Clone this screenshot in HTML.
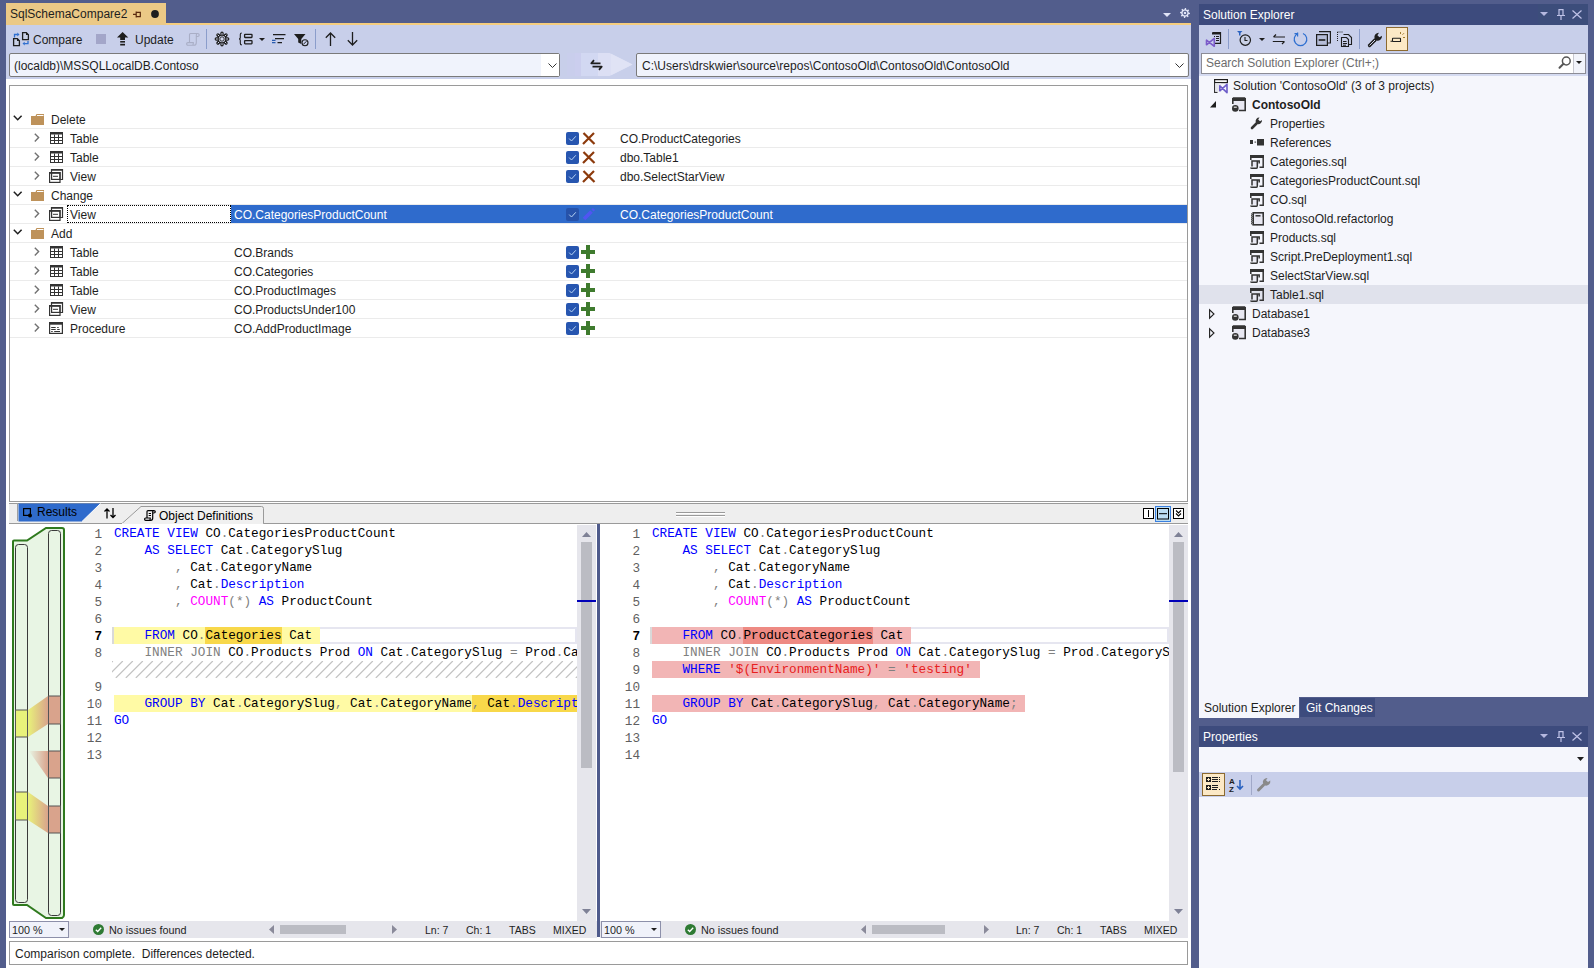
<!DOCTYPE html>
<html><head><meta charset="utf-8">
<style>
*{box-sizing:border-box}
html,body{margin:0;padding:0}
body{width:1594px;height:968px;overflow:hidden;position:relative;background:#525D8C;font-family:"Liberation Sans",sans-serif;font-size:12px;color:#1E1E1E}
.a{position:absolute}
.t{position:absolute;white-space:pre;line-height:14px}
svg{position:absolute;overflow:visible}
.m{position:absolute;white-space:pre;font-family:"Liberation Mono",monospace;font-size:12.7px;line-height:17px;color:#000}
.k{color:#0000FF}.g{color:#808080}.p{color:#FF00FF}.r{color:#E82020}
</style></head><body>

<div class="a" style="left:6px;top:3px;width:160px;height:22px;background:#EBC986;"></div>
<div class="t" style="left:10px;top:7px;">SqlSchemaCompare2</div>
<div class="a" style="left:166px;top:23px;width:1025px;height:2px;background:#F5CD7E;"></div>
<div class="a" style="left:6px;top:25px;width:1185px;height:54px;background:#C8CFEA;"></div>
<div class="a" style="left:6px;top:79px;width:1185px;height:889px;background:#FFFFFF;"></div>
<div class="a" style="left:9px;top:53px;width:551px;height:24px;background:#F0F3FC;border:1px solid #7A7A7A;border-radius:2px"></div>
<div class="t" style="left:14px;top:59px;">(localdb)\MSSQLLocalDB.Contoso</div>
<div class="a" style="left:636px;top:53px;width:553px;height:24px;background:#F0F3FC;border:1px solid #7A7A7A;border-radius:2px"></div>
<div class="t" style="left:642px;top:59px;">C:\Users\drskwier\source\repos\ContosoOld\ContosoOld\ContosoOld</div>
<div class="a" style="left:9px;top:85px;width:1179px;height:417px;background:#FFFFFF;border:1px solid #9A9A9A"></div>
<div class="a" style="left:10px;top:128px;width:1177px;height:1px;background:#EBEBEB;"></div>
<svg style="left:13px;top:115px" width="10" height="6" viewBox="0 0 10 6"><path d="M0.8 0.8L4.7 4.7L8.6 0.8" fill="none" stroke="#1E1E1E" stroke-width="1.5"/></svg>
<svg style="left:31px;top:114px" width="13" height="11" viewBox="0 0 13 11"><path d="M0 2H4.5L5.5 0H13V11H0Z" fill="#BE925A"/><rect x="6" y="1" width="6.5" height="1" fill="#fff"/></svg>
<div class="t" style="left:51px;top:113px;">Delete</div>
<div class="a" style="left:10px;top:147px;width:1177px;height:1px;background:#EBEBEB;"></div>
<svg style="left:34px;top:133px" width="6" height="10" viewBox="0 0 6 10"><path d="M0.8 0.8L4.6 4.6L0.8 8.4" fill="none" stroke="#717171" stroke-width="1.4"/></svg>
<svg style="left:50px;top:132px" width="13" height="12" viewBox="0 0 13 12"><rect x="0.5" y="0.5" width="12" height="11" fill="#fff" stroke="#333" stroke-width="1"/><rect x="0" y="0" width="13" height="2.5" fill="#333"/><path d="M4.5 2.5V12M8.5 2.5V12M0 5.5H13M0 8.5H13" stroke="#333" stroke-width="1"/></svg>
<div class="t" style="left:70px;top:132px;">Table</div>
<svg style="left:566px;top:132px" width="13" height="13" viewBox="0 0 13 13"><rect x="0" y="0" width="13" height="13" rx="2" fill="#2756B0"/><path d="M3.2 6.6L5.5 9L9.8 4.3" fill="none" stroke="#B8D4F4" stroke-width="1"/></svg>
<svg style="left:582px;top:132px" width="14" height="13" viewBox="0 0 14 13"><path d="M1.5 1L12.5 12M12 1L1 12" stroke="#8C3A0C" stroke-width="2.2"/></svg>
<div class="t" style="left:620px;top:132px;">CO.ProductCategories</div>
<div class="a" style="left:10px;top:166px;width:1177px;height:1px;background:#EBEBEB;"></div>
<svg style="left:34px;top:152px" width="6" height="10" viewBox="0 0 6 10"><path d="M0.8 0.8L4.6 4.6L0.8 8.4" fill="none" stroke="#717171" stroke-width="1.4"/></svg>
<svg style="left:50px;top:151px" width="13" height="12" viewBox="0 0 13 12"><rect x="0.5" y="0.5" width="12" height="11" fill="#fff" stroke="#333" stroke-width="1"/><rect x="0" y="0" width="13" height="2.5" fill="#333"/><path d="M4.5 2.5V12M8.5 2.5V12M0 5.5H13M0 8.5H13" stroke="#333" stroke-width="1"/></svg>
<div class="t" style="left:70px;top:151px;">Table</div>
<svg style="left:566px;top:151px" width="13" height="13" viewBox="0 0 13 13"><rect x="0" y="0" width="13" height="13" rx="2" fill="#2756B0"/><path d="M3.2 6.6L5.5 9L9.8 4.3" fill="none" stroke="#B8D4F4" stroke-width="1"/></svg>
<svg style="left:582px;top:151px" width="14" height="13" viewBox="0 0 14 13"><path d="M1.5 1L12.5 12M12 1L1 12" stroke="#8C3A0C" stroke-width="2.2"/></svg>
<div class="t" style="left:620px;top:151px;">dbo.Table1</div>
<div class="a" style="left:10px;top:185px;width:1177px;height:1px;background:#EBEBEB;"></div>
<svg style="left:34px;top:171px" width="6" height="10" viewBox="0 0 6 10"><path d="M0.8 0.8L4.6 4.6L0.8 8.4" fill="none" stroke="#717171" stroke-width="1.4"/></svg>
<svg style="left:49px;top:169px" width="14" height="14" viewBox="0 0 14 14"><path d="M2.5 3.5V0.5H13.5V10.5H11" fill="none" stroke="#333" stroke-width="1.2"/><rect x="2.6" y="3.6" width="8.4" height="6.8" fill="none" stroke="#333" stroke-width="1.2"/><rect x="0.6" y="3.6" width="10.4" height="9.8" fill="none" stroke="#333" stroke-width="1.2"/><path d="M2 1H13.5M0.5 4H11" stroke="#333" stroke-width="1.5"/><path d="M4 7.3H9" stroke="#333" stroke-width="1"/></svg>
<div class="t" style="left:70px;top:170px;">View</div>
<svg style="left:566px;top:170px" width="13" height="13" viewBox="0 0 13 13"><rect x="0" y="0" width="13" height="13" rx="2" fill="#2756B0"/><path d="M3.2 6.6L5.5 9L9.8 4.3" fill="none" stroke="#B8D4F4" stroke-width="1"/></svg>
<svg style="left:582px;top:170px" width="14" height="13" viewBox="0 0 14 13"><path d="M1.5 1L12.5 12M12 1L1 12" stroke="#8C3A0C" stroke-width="2.2"/></svg>
<div class="t" style="left:620px;top:170px;">dbo.SelectStarView</div>
<div class="a" style="left:10px;top:204px;width:1177px;height:1px;background:#EBEBEB;"></div>
<svg style="left:13px;top:191px" width="10" height="6" viewBox="0 0 10 6"><path d="M0.8 0.8L4.7 4.7L8.6 0.8" fill="none" stroke="#1E1E1E" stroke-width="1.5"/></svg>
<svg style="left:31px;top:190px" width="13" height="11" viewBox="0 0 13 11"><path d="M0 2H4.5L5.5 0H13V11H0Z" fill="#BE925A"/><rect x="6" y="1" width="6.5" height="1" fill="#fff"/></svg>
<div class="t" style="left:51px;top:189px;">Change</div>
<div class="a" style="left:10px;top:223px;width:1177px;height:1px;background:#EBEBEB;"></div>
<div class="a" style="left:231px;top:200px;width:956px;height:19px;background:#2F6BCC;top:205px;height:18px"></div>
<div class="a" style="left:67px;top:205px;width:164px;height:18px;background:#FFFFFF;border:1px dotted #000"></div>
<svg style="left:34px;top:209px" width="6" height="10" viewBox="0 0 6 10"><path d="M0.8 0.8L4.6 4.6L0.8 8.4" fill="none" stroke="#717171" stroke-width="1.4"/></svg>
<svg style="left:49px;top:207px" width="14" height="14" viewBox="0 0 14 14"><path d="M2.5 3.5V0.5H13.5V10.5H11" fill="none" stroke="#333" stroke-width="1.2"/><rect x="2.6" y="3.6" width="8.4" height="6.8" fill="none" stroke="#333" stroke-width="1.2"/><rect x="0.6" y="3.6" width="10.4" height="9.8" fill="none" stroke="#333" stroke-width="1.2"/><path d="M2 1H13.5M0.5 4H11" stroke="#333" stroke-width="1.5"/><path d="M4 7.3H9" stroke="#333" stroke-width="1"/></svg>
<div class="t" style="left:70px;top:208px;">View</div>
<div class="t" style="left:234px;top:208px;color:#FFFFFF;">CO.CategoriesProductCount</div>
<svg style="left:566px;top:208px" width="13" height="13" viewBox="0 0 13 13"><rect x="0" y="0" width="13" height="13" rx="2" fill="#2652AA"/><path d="M3.2 6.6L5.5 9L9.8 4.3" fill="none" stroke="#B8D4F4" stroke-width="1"/></svg>
<svg style="left:582px;top:208px" width="14" height="13" viewBox="0 0 14 13"><path d="M2 11L9.5 3.5" stroke="#5055F2" stroke-width="3.8"/><path d="M10.5 2.5L12 1" stroke="#5055F2" stroke-width="3"/></svg>
<div class="t" style="left:620px;top:208px;color:#FFFFFF;">CO.CategoriesProductCount</div>
<div class="a" style="left:10px;top:242px;width:1177px;height:1px;background:#EBEBEB;"></div>
<svg style="left:13px;top:229px" width="10" height="6" viewBox="0 0 10 6"><path d="M0.8 0.8L4.7 4.7L8.6 0.8" fill="none" stroke="#1E1E1E" stroke-width="1.5"/></svg>
<svg style="left:31px;top:228px" width="13" height="11" viewBox="0 0 13 11"><path d="M0 2H4.5L5.5 0H13V11H0Z" fill="#BE925A"/><rect x="6" y="1" width="6.5" height="1" fill="#fff"/></svg>
<div class="t" style="left:51px;top:227px;">Add</div>
<div class="a" style="left:10px;top:261px;width:1177px;height:1px;background:#EBEBEB;"></div>
<svg style="left:34px;top:247px" width="6" height="10" viewBox="0 0 6 10"><path d="M0.8 0.8L4.6 4.6L0.8 8.4" fill="none" stroke="#717171" stroke-width="1.4"/></svg>
<svg style="left:50px;top:246px" width="13" height="12" viewBox="0 0 13 12"><rect x="0.5" y="0.5" width="12" height="11" fill="#fff" stroke="#333" stroke-width="1"/><rect x="0" y="0" width="13" height="2.5" fill="#333"/><path d="M4.5 2.5V12M8.5 2.5V12M0 5.5H13M0 8.5H13" stroke="#333" stroke-width="1"/></svg>
<div class="t" style="left:70px;top:246px;">Table</div>
<div class="t" style="left:234px;top:246px;">CO.Brands</div>
<svg style="left:566px;top:246px" width="13" height="13" viewBox="0 0 13 13"><rect x="0" y="0" width="13" height="13" rx="2" fill="#2756B0"/><path d="M3.2 6.6L5.5 9L9.8 4.3" fill="none" stroke="#B8D4F4" stroke-width="1"/></svg>
<svg style="left:581px;top:245px" width="14" height="14" viewBox="0 0 14 14"><path d="M5 0H9V5H14V9H9V14H5V9H0V5H5Z" fill="#3F7B2E"/></svg>
<div class="a" style="left:10px;top:280px;width:1177px;height:1px;background:#EBEBEB;"></div>
<svg style="left:34px;top:266px" width="6" height="10" viewBox="0 0 6 10"><path d="M0.8 0.8L4.6 4.6L0.8 8.4" fill="none" stroke="#717171" stroke-width="1.4"/></svg>
<svg style="left:50px;top:265px" width="13" height="12" viewBox="0 0 13 12"><rect x="0.5" y="0.5" width="12" height="11" fill="#fff" stroke="#333" stroke-width="1"/><rect x="0" y="0" width="13" height="2.5" fill="#333"/><path d="M4.5 2.5V12M8.5 2.5V12M0 5.5H13M0 8.5H13" stroke="#333" stroke-width="1"/></svg>
<div class="t" style="left:70px;top:265px;">Table</div>
<div class="t" style="left:234px;top:265px;">CO.Categories</div>
<svg style="left:566px;top:265px" width="13" height="13" viewBox="0 0 13 13"><rect x="0" y="0" width="13" height="13" rx="2" fill="#2756B0"/><path d="M3.2 6.6L5.5 9L9.8 4.3" fill="none" stroke="#B8D4F4" stroke-width="1"/></svg>
<svg style="left:581px;top:264px" width="14" height="14" viewBox="0 0 14 14"><path d="M5 0H9V5H14V9H9V14H5V9H0V5H5Z" fill="#3F7B2E"/></svg>
<div class="a" style="left:10px;top:299px;width:1177px;height:1px;background:#EBEBEB;"></div>
<svg style="left:34px;top:285px" width="6" height="10" viewBox="0 0 6 10"><path d="M0.8 0.8L4.6 4.6L0.8 8.4" fill="none" stroke="#717171" stroke-width="1.4"/></svg>
<svg style="left:50px;top:284px" width="13" height="12" viewBox="0 0 13 12"><rect x="0.5" y="0.5" width="12" height="11" fill="#fff" stroke="#333" stroke-width="1"/><rect x="0" y="0" width="13" height="2.5" fill="#333"/><path d="M4.5 2.5V12M8.5 2.5V12M0 5.5H13M0 8.5H13" stroke="#333" stroke-width="1"/></svg>
<div class="t" style="left:70px;top:284px;">Table</div>
<div class="t" style="left:234px;top:284px;">CO.ProductImages</div>
<svg style="left:566px;top:284px" width="13" height="13" viewBox="0 0 13 13"><rect x="0" y="0" width="13" height="13" rx="2" fill="#2756B0"/><path d="M3.2 6.6L5.5 9L9.8 4.3" fill="none" stroke="#B8D4F4" stroke-width="1"/></svg>
<svg style="left:581px;top:283px" width="14" height="14" viewBox="0 0 14 14"><path d="M5 0H9V5H14V9H9V14H5V9H0V5H5Z" fill="#3F7B2E"/></svg>
<div class="a" style="left:10px;top:318px;width:1177px;height:1px;background:#EBEBEB;"></div>
<svg style="left:34px;top:304px" width="6" height="10" viewBox="0 0 6 10"><path d="M0.8 0.8L4.6 4.6L0.8 8.4" fill="none" stroke="#717171" stroke-width="1.4"/></svg>
<svg style="left:49px;top:302px" width="14" height="14" viewBox="0 0 14 14"><path d="M2.5 3.5V0.5H13.5V10.5H11" fill="none" stroke="#333" stroke-width="1.2"/><rect x="2.6" y="3.6" width="8.4" height="6.8" fill="none" stroke="#333" stroke-width="1.2"/><rect x="0.6" y="3.6" width="10.4" height="9.8" fill="none" stroke="#333" stroke-width="1.2"/><path d="M2 1H13.5M0.5 4H11" stroke="#333" stroke-width="1.5"/><path d="M4 7.3H9" stroke="#333" stroke-width="1"/></svg>
<div class="t" style="left:70px;top:303px;">View</div>
<div class="t" style="left:234px;top:303px;">CO.ProductsUnder100</div>
<svg style="left:566px;top:303px" width="13" height="13" viewBox="0 0 13 13"><rect x="0" y="0" width="13" height="13" rx="2" fill="#2756B0"/><path d="M3.2 6.6L5.5 9L9.8 4.3" fill="none" stroke="#B8D4F4" stroke-width="1"/></svg>
<svg style="left:581px;top:302px" width="14" height="14" viewBox="0 0 14 14"><path d="M5 0H9V5H14V9H9V14H5V9H0V5H5Z" fill="#3F7B2E"/></svg>
<div class="a" style="left:10px;top:337px;width:1177px;height:1px;background:#EBEBEB;"></div>
<svg style="left:34px;top:323px" width="6" height="10" viewBox="0 0 6 10"><path d="M0.8 0.8L4.6 4.6L0.8 8.4" fill="none" stroke="#717171" stroke-width="1.4"/></svg>
<svg style="left:49px;top:322px" width="14" height="12" viewBox="0 0 14 12"><rect x="0.6" y="0.6" width="12.8" height="10.8" fill="#fff" stroke="#333" stroke-width="1.2"/><rect x="0" y="0" width="14" height="2.7" fill="#333"/><path d="M2.2 5.5H6.7M8.2 5.5H9.7M2.2 7.5H6.7M8.2 7.5H10.7M2.2 9.5H3.7M5.2 9.5H11" stroke="#333" stroke-width="1"/></svg>
<div class="t" style="left:70px;top:322px;">Procedure</div>
<div class="t" style="left:234px;top:322px;">CO.AddProductImage</div>
<svg style="left:566px;top:322px" width="13" height="13" viewBox="0 0 13 13"><rect x="0" y="0" width="13" height="13" rx="2" fill="#2756B0"/><path d="M3.2 6.6L5.5 9L9.8 4.3" fill="none" stroke="#B8D4F4" stroke-width="1"/></svg>
<svg style="left:581px;top:321px" width="14" height="14" viewBox="0 0 14 14"><path d="M5 0H9V5H14V9H9V14H5V9H0V5H5Z" fill="#3F7B2E"/></svg>
<svg style="left:12px;top:32px" width="18" height="15" viewBox="0 0 18 15"><path d="M1.6 6.6H5.3L7.4 8.7V13.6H1.6Z" fill="#C9D0E6" stroke="#1E1E1E" stroke-width="1.3"/><path d="M5 6.2L7.8 9H5Z" fill="#1E1E1E"/>
<path d="M10.6 0.6H14.3L16.4 2.7V7.6H10.6Z" fill="#C9D0E6" stroke="#1E1E1E" stroke-width="1.3"/><path d="M14 0.2L16.8 3H14Z" fill="#1E1E1E"/>
<path d="M2.5 5.5V2.5H5.8" fill="none" stroke="#2F6FCF" stroke-width="1.3"/><path d="M5.3 0.6L7.5 2.5L5.3 4.4Z" fill="#2F6FCF"/>
<path d="M16 9V11.6H12.2" fill="none" stroke="#2F6FCF" stroke-width="1.3"/><path d="M12.7 9.7L10.5 11.6L12.7 13.5Z" fill="#2F6FCF"/></svg>
<div class="t" style="left:33px;top:33px;">Compare</div>
<div class="a" style="left:96px;top:34px;width:10px;height:10px;background:#A3A6C9;"></div>
<svg style="left:117px;top:32px" width="12" height="14" viewBox="0 0 12 14"><path d="M5.6 0L11.3 5.5H8V8H3.2V5.5H0Z" fill="#1E1E1E"/><rect x="3.2" y="9" width="4.8" height="1.6" fill="#1E1E1E"/><rect x="3.2" y="11.8" width="4.8" height="1.7" fill="#1E1E1E"/></svg>
<div class="t" style="left:135px;top:33px;">Update</div>
<svg style="left:186px;top:33px" width="14" height="13" viewBox="0 0 14 13"><path d="M3.5 10V1.5Q3.5 0.5 4.5 0.5H11.5Q13.2 0.5 13.2 2Q13.2 3.5 11.5 3.5H10.5M11.5 0.5Q10.3 0.5 10.3 2V9.5Q10.3 12.3 8 12.3H2Q0.6 12.3 0.6 10.8Q0.6 9.6 2 9.6H7.3V10.8Q7.3 12.3 6 12.3" fill="none" stroke="#A9AEC6" stroke-width="1.1"/></svg>
<div class="a" style="left:206px;top:29px;width:1px;height:20px;background:#8B9DCB;"></div>
<svg style="left:215px;top:32px" width="14" height="14" viewBox="0 0 14 14"><path d="M11.60 7.00L12.70 7.00M10.25 10.25L11.03 11.03M7.00 11.60L7.00 12.70M3.75 10.25L2.97 11.03M2.40 7.00L1.30 7.00M3.75 3.75L2.97 2.97M7.00 2.40L7.00 1.30M10.25 3.75L11.03 2.97" stroke="#1E1E1E" stroke-width="3.4" stroke-linecap="round"/><circle cx="7" cy="7" r="4.3" fill="#1E1E1E"/><path d="M11.60 7.00L12.70 7.00M10.25 10.25L11.03 11.03M7.00 11.60L7.00 12.70M3.75 10.25L2.97 11.03M2.40 7.00L1.30 7.00M3.75 3.75L2.97 2.97M7.00 2.40L7.00 1.30M10.25 3.75L11.03 2.97" stroke="#D5DAF0" stroke-width="1" stroke-linecap="round"/><circle cx="7" cy="7" r="3.2" fill="#D5DAF0"/><circle cx="7" cy="7" r="2.2" fill="none" stroke="#1E1E1E" stroke-width="0.9"/></svg>
<svg style="left:238px;top:32px" width="15" height="14" viewBox="0 0 15 14"><path d="M3.8 1Q2.3 1 2.3 2.6V5.4Q2.3 6.9 1 6.9Q2.3 6.9 2.3 8.4V11.2Q2.3 12.9 3.8 12.9" fill="none" stroke="#1E1E1E" stroke-width="1.1"/><rect x="6.6" y="2.3" width="7.4" height="3.2" rx="0.5" fill="none" stroke="#1E1E1E" stroke-width="1.3"/><rect x="6.6" y="8.6" width="7.4" height="3.2" rx="0.5" fill="none" stroke="#1E1E1E" stroke-width="1.3"/></svg>
<svg style="left:259px;top:38px" width="6" height="3" viewBox="0 0 6 3"><path d="M0 0H6L3 3Z" fill="#1E1E1E"/></svg>
<svg style="left:271px;top:34px" width="15" height="10" viewBox="0 0 15 10"><path d="M2 0.6H14.5M4 4.6H13M6.5 8.6H11" stroke="#1E1E1E" stroke-width="1.2"/><path d="M1 6.3H4.5M1 8.6H4.5" stroke="#2A5DB0" stroke-width="1.2"/></svg>
<svg style="left:294px;top:34px" width="15" height="12" viewBox="0 0 15 12"><path d="M0 0H11.5L7.3 5V10L4.2 8.5V5Z" fill="#1E1E1E"/><circle cx="11" cy="8.7" r="3" fill="#CAD1EB" stroke="#1E1E1E" stroke-width="1.1"/><path d="M9.5 10.2L12.5 7.2" stroke="#1E1E1E" stroke-width="1"/></svg>
<div class="a" style="left:315px;top:29px;width:1px;height:20px;background:#8B9DCB;"></div>
<svg style="left:325px;top:32px" width="11" height="14" viewBox="0 0 11 14"><path d="M5.5 1V14M0.8 5.7L5.5 1L10.2 5.7" fill="none" stroke="#1E1E1E" stroke-width="1.3"/></svg>
<svg style="left:347px;top:32px" width="11" height="14" viewBox="0 0 11 14"><path d="M5.5 0V13M0.8 8.3L5.5 13L10.2 8.3" fill="none" stroke="#1E1E1E" stroke-width="1.3"/></svg>
<svg style="left:133px;top:11px" width="8" height="7" viewBox="0 0 8 7"><path d="M0 3.4H3M3.2 0.5V6.5M3.2 1.3H7.3V5.6H3.2" fill="none" stroke="#5A2A0E" stroke-width="1.2"/></svg>
<svg style="left:151px;top:10px" width="8" height="8" viewBox="0 0 8 8"><circle cx="4" cy="4" r="3.9" fill="#1E1E1E"/></svg>
<svg style="left:1163px;top:13px" width="8" height="4" viewBox="0 0 8 4"><path d="M0 0H8L4 4Z" fill="#E0E4F7"/></svg>
<svg style="left:1180px;top:8px" width="10" height="10" viewBox="0 0 10 10"><path d="M5.00 0.00 L5.98 0.10 L6.38 1.67 L7.00 2.01 L8.54 1.46 L9.16 2.22 L8.33 3.62 L8.53 4.30 L10.00 5.00 L9.90 5.98 L8.33 6.38 L7.99 7.00 L8.54 8.54 L7.78 9.16 L6.38 8.33 L5.70 8.53 L5.00 10.00 L4.02 9.90 L3.62 8.33 L3.00 7.99 L1.46 8.54 L0.84 7.78 L1.67 6.38 L1.47 5.70 L0.00 5.00 L0.10 4.02 L1.67 3.62 L2.01 3.00 L1.46 1.46 L2.22 0.84 L3.62 1.67 L4.30 1.47Z" fill="#E0E4F7"/><circle cx="5" cy="5" r="1.9" fill="none" stroke="#3D4B7D" stroke-width="1"/></svg>
<div class="a" style="left:541px;top:54px;width:18px;height:22px;background:#FFFFFF;"></div>
<svg style="left:548px;top:63px" width="9" height="5" viewBox="0 0 9 5"><path d="M0.5 0.5L4.5 4.5L8.5 0.5" fill="none" stroke="#333" stroke-width="1"/></svg>
<div class="a" style="left:1170px;top:54px;width:17px;height:22px;background:#FFFFFF;"></div>
<svg style="left:1175px;top:63px" width="9" height="5" viewBox="0 0 9 5"><path d="M0.5 0.5L4.5 4.5L8.5 0.5" fill="none" stroke="#333" stroke-width="1"/></svg>
<svg style="left:567px;top:53px" width="66" height="23" viewBox="0 0 66 23"><rect x="0" y="0" width="8" height="23" fill="#C9CEEC"/><rect x="8" y="0" width="6" height="23" fill="#CBCEEE"/>
<rect x="14" y="0" width="17" height="23" fill="#D2D8F2"/>
<path d="M31 0H42.5L65.5 11.5L42.5 23H31Z" fill="#DCDFF4"/><path d="M44 0.7L65.5 11.5L44 22.3Z" fill="#E0E3F5"/></svg>
<svg style="left:590px;top:59px" width="13" height="12" viewBox="0 0 13 12"><path d="M10.5 4.3H1.3L4 1.2" fill="none" stroke="#1E1E1E" stroke-width="1.8" stroke-linejoin="round"/><path d="M2.5 7.7H11.7L9 10.8" fill="none" stroke="#1E1E1E" stroke-width="1.8" stroke-linejoin="round"/></svg>
<div class="a" style="left:9px;top:502px;width:1179px;height:22px;background:#EEEEEE;"></div>
<div class="a" style="left:9px;top:502px;width:1179px;height:1px;background:#FFFFFF;"></div>
<div class="a" style="left:9px;top:503px;width:1179px;height:1px;background:#9A9A9A;"></div>
<div class="a" style="left:9px;top:523px;width:1179px;height:1px;background:#9A9A9A;"></div>
<svg style="left:9px;top:503px" width="255" height="21" viewBox="0 0 255 21"><path d="M8.5 0V18" stroke="#A0A0A0" stroke-width="1"/>
<path d="M9.5 0.5H91.5L73 18.5H9.5Z" fill="#2F6BCC"/>
<path d="M91.5 0.5L73 18.5" stroke="#FFFFFF" stroke-width="1"/>
<path d="M113 20.5L132 3.5H252.5Q254.5 3.5 254.5 5.5V20.5" fill="#F0F0F0" stroke="#9A9A9A" stroke-width="1"/>
<rect x="113" y="20" width="141" height="1" fill="#F0F0F0"/></svg>
<svg style="left:23px;top:508px" width="9" height="10" viewBox="0 0 9 10"><rect x="0.6" y="0.6" width="6.8" height="6.8" fill="none" stroke="#000" stroke-width="1.2"/><circle cx="7" cy="7.5" r="2" fill="#000"/></svg>
<div class="t" style="left:37px;top:505px;color:#000000;">Results</div>
<svg style="left:104px;top:508px" width="12" height="11" viewBox="0 0 12 11"><path d="M3 10.5V1M0.5 3.5L3 1L5.5 3.5M9 0V9.5M6.5 7L9 9.5L11.5 7" fill="none" stroke="#000" stroke-width="1.3"/></svg>
<svg style="left:144px;top:510px" width="12" height="11" viewBox="0 0 12 11"><path d="M3 8.5V1.5Q3 0.6 4 0.6H9.8Q11.3 0.6 11.3 1.8Q11.3 3 9.8 3H9M9.8 0.6Q8.7 0.6 8.7 1.8V8Q8.7 10.3 6.8 10.3H1.7Q0.6 10.3 0.6 9.1Q0.6 8 1.7 8H6.2V9.1Q6.2 10.3 5.1 10.3M4.7 3.5H7M4.7 5.5H7" fill="none" stroke="#000" stroke-width="1.2"/></svg>
<div class="t" style="left:159px;top:509px;color:#000000;">Object Definitions</div>
<svg style="left:1143px;top:508px" width="42" height="13" viewBox="0 0 42 13"><rect x="0.5" y="0.5" width="10" height="10" fill="#fff" stroke="#000"/><path d="M5.5 2V9" stroke="#000"/>
<rect x="12.5" y="-1.5" width="15" height="15" fill="#BCDDF2" stroke="#3A80E0"/><rect x="14.5" y="0.5" width="11" height="10.5" fill="#BCDDF2" stroke="#000"/><path d="M16 5.7H24" stroke="#000"/>
<rect x="30.5" y="0.5" width="10" height="10" fill="#fff" stroke="#000"/><path d="M33 2.5L35.5 5L38 2.5M33 5.5L35.5 8L38 5.5" fill="none" stroke="#000" stroke-width="1.1"/></svg>
<div class="a" style="left:676px;top:512px;width:49px;height:1px;background:#9A9A9A;"></div>
<div class="a" style="left:676px;top:515px;width:49px;height:1px;background:#9A9A9A;"></div>
<div class="a" style="left:676px;top:513px;width:49px;height:1px;background:#FFFFFF;"></div>
<div class="a" style="left:676px;top:516px;width:49px;height:1px;background:#FFFFFF;"></div>
<div class="a" style="left:112px;top:627px;width:465px;height:17px;background:transparent;border:2px solid #E6E6F0;border-left:none"></div>
<div class="a" style="left:112px;top:627px;width:2px;height:17px;background:#D9D9D9;"></div>
<div class="a" style="left:114px;top:627px;width:205.74px;height:17px;background:#FFFAA5;"></div>
<div class="a" style="left:114px;top:695px;width:463px;height:17px;background:#FFFAA5;"></div>
<div class="a" style="left:205.44px;top:627px;width:76.2px;height:17px;background:#F8D84A;"></div>
<div class="a" style="left:472.14px;top:695px;width:104.86px;height:17px;background:#F8D84A;"></div>
<div class="m" style="left:62px;top:526px;width:40px;text-align:right;color:#5F5F5F;">1</div>
<div class="m" style="left:114px;top:525px;width:463px;overflow:hidden"><span class="k">CREATE</span> <span class="k">VIEW</span> CO<span class="g">.</span>CategoriesProductCount</div>
<div class="m" style="left:62px;top:543px;width:40px;text-align:right;color:#5F5F5F;">2</div>
<div class="m" style="left:114px;top:542px;width:463px;overflow:hidden">    <span class="k">AS</span> <span class="k">SELECT</span> Cat<span class="g">.</span>CategorySlug</div>
<div class="m" style="left:62px;top:560px;width:40px;text-align:right;color:#5F5F5F;">3</div>
<div class="m" style="left:114px;top:559px;width:463px;overflow:hidden">        <span class="g">,</span> Cat<span class="g">.</span>CategoryName</div>
<div class="m" style="left:62px;top:577px;width:40px;text-align:right;color:#5F5F5F;">4</div>
<div class="m" style="left:114px;top:576px;width:463px;overflow:hidden">        <span class="g">,</span> Cat<span class="g">.</span><span class="k">Description</span></div>
<div class="m" style="left:62px;top:594px;width:40px;text-align:right;color:#5F5F5F;">5</div>
<div class="m" style="left:114px;top:593px;width:463px;overflow:hidden">        <span class="g">,</span> <span class="p">COUNT</span><span class="g">(</span><span class="g">*</span><span class="g">)</span> <span class="k">AS</span> ProductCount</div>
<div class="m" style="left:62px;top:611px;width:40px;text-align:right;color:#5F5F5F;">6</div>
<div class="m" style="left:62px;top:628px;width:40px;text-align:right;color:#5F5F5F;font-weight:bold;color:#000;">7</div>
<div class="m" style="left:114px;top:627px;width:463px;overflow:hidden">    <span class="k">FROM</span> CO<span class="g">.</span>Categories Cat</div>
<div class="m" style="left:62px;top:645px;width:40px;text-align:right;color:#5F5F5F;">8</div>
<div class="m" style="left:114px;top:644px;width:463px;overflow:hidden">    <span class="g">INNER</span> <span class="g">JOIN</span> CO<span class="g">.</span>Products Prod <span class="k">ON</span> Cat<span class="g">.</span>CategorySlug <span class="g">=</span> Prod<span class="g">.</span>CategorySlug</div>
<svg style="left:112px;top:661px;overflow:hidden" width="465" height="17"><path d="M-16.2 17L0.8 0M-6.2 17L10.8 0M3.8 17L20.8 0M13.8 17L30.8 0M23.8 17L40.8 0M33.8 17L50.8 0M43.8 17L60.8 0M53.8 17L70.8 0M63.8 17L80.8 0M73.8 17L90.8 0M83.8 17L100.8 0M93.8 17L110.8 0M103.8 17L120.8 0M113.8 17L130.8 0M123.8 17L140.8 0M133.8 17L150.8 0M143.8 17L160.8 0M153.8 17L170.8 0M163.8 17L180.8 0M173.8 17L190.8 0M183.8 17L200.8 0M193.8 17L210.8 0M203.8 17L220.8 0M213.8 17L230.8 0M223.8 17L240.8 0M233.8 17L250.8 0M243.8 17L260.8 0M253.8 17L270.8 0M263.8 17L280.8 0M273.8 17L290.8 0M283.8 17L300.8 0M293.8 17L310.8 0M303.8 17L320.8 0M313.8 17L330.8 0M323.8 17L340.8 0M333.8 17L350.8 0M343.8 17L360.8 0M353.8 17L370.8 0M363.8 17L380.8 0M373.8 17L390.8 0M383.8 17L400.8 0M393.8 17L410.8 0M403.8 17L420.8 0M413.8 17L430.8 0M423.8 17L440.8 0M433.8 17L450.8 0M443.8 17L460.8 0M453.8 17L470.8 0M463.8 17L480.8 0M473.8 17L490.8 0" stroke="#C2C2C2" stroke-width="1.2"/></svg>
<div class="m" style="left:62px;top:679px;width:40px;text-align:right;color:#5F5F5F;">9</div>
<div class="m" style="left:62px;top:696px;width:40px;text-align:right;color:#5F5F5F;">10</div>
<div class="m" style="left:114px;top:695px;width:463px;overflow:hidden">    <span class="k">GROUP</span> <span class="k">BY</span> Cat<span class="g">.</span>CategorySlug<span class="g">,</span> Cat<span class="g">.</span>CategoryName<span class="g">,</span> Cat<span class="g">.</span><span class="k">Description</span></div>
<div class="m" style="left:62px;top:713px;width:40px;text-align:right;color:#5F5F5F;">11</div>
<div class="m" style="left:114px;top:712px;width:463px;overflow:hidden"><span class="k">GO</span></div>
<div class="m" style="left:62px;top:730px;width:40px;text-align:right;color:#5F5F5F;">12</div>
<div class="m" style="left:62px;top:747px;width:40px;text-align:right;color:#5F5F5F;">13</div>
<div class="a" style="left:650px;top:627px;width:519px;height:17px;background:transparent;border:2px solid #E6E6F0;border-left:none"></div>
<div class="a" style="left:650px;top:627px;width:2px;height:17px;background:#D9D9D9;"></div>
<div class="a" style="left:652px;top:627px;width:259.0799999999999px;height:17px;background:#F2B5B5;"></div>
<div class="a" style="left:652px;top:661px;width:327.6600000000001px;height:17px;background:#F2B5B5;"></div>
<div class="a" style="left:652px;top:695px;width:373.3800000000001px;height:17px;background:#F2B5B5;"></div>
<div class="a" style="left:743.44px;top:627px;width:129.54px;height:17px;background:#EE8A83;"></div>
<div class="m" style="left:600px;top:526px;width:40px;text-align:right;color:#5F5F5F;">1</div>
<div class="m" style="left:652px;top:525px;width:517px;overflow:hidden"><span class="k">CREATE</span> <span class="k">VIEW</span> CO<span class="g">.</span>CategoriesProductCount</div>
<div class="m" style="left:600px;top:543px;width:40px;text-align:right;color:#5F5F5F;">2</div>
<div class="m" style="left:652px;top:542px;width:517px;overflow:hidden">    <span class="k">AS</span> <span class="k">SELECT</span> Cat<span class="g">.</span>CategorySlug</div>
<div class="m" style="left:600px;top:560px;width:40px;text-align:right;color:#5F5F5F;">3</div>
<div class="m" style="left:652px;top:559px;width:517px;overflow:hidden">        <span class="g">,</span> Cat<span class="g">.</span>CategoryName</div>
<div class="m" style="left:600px;top:577px;width:40px;text-align:right;color:#5F5F5F;">4</div>
<div class="m" style="left:652px;top:576px;width:517px;overflow:hidden">        <span class="g">,</span> Cat<span class="g">.</span><span class="k">Description</span></div>
<div class="m" style="left:600px;top:594px;width:40px;text-align:right;color:#5F5F5F;">5</div>
<div class="m" style="left:652px;top:593px;width:517px;overflow:hidden">        <span class="g">,</span> <span class="p">COUNT</span><span class="g">(</span><span class="g">*</span><span class="g">)</span> <span class="k">AS</span> ProductCount</div>
<div class="m" style="left:600px;top:611px;width:40px;text-align:right;color:#5F5F5F;">6</div>
<div class="m" style="left:600px;top:628px;width:40px;text-align:right;color:#5F5F5F;font-weight:bold;color:#000;">7</div>
<div class="m" style="left:652px;top:627px;width:517px;overflow:hidden">    <span class="k">FROM</span> CO<span class="g">.</span>ProductCategories Cat</div>
<div class="m" style="left:600px;top:645px;width:40px;text-align:right;color:#5F5F5F;">8</div>
<div class="m" style="left:652px;top:644px;width:517px;overflow:hidden">    <span class="g">INNER</span> <span class="g">JOIN</span> CO<span class="g">.</span>Products Prod <span class="k">ON</span> Cat<span class="g">.</span>CategorySlug <span class="g">=</span> Prod<span class="g">.</span>CategorySlug</div>
<div class="m" style="left:600px;top:662px;width:40px;text-align:right;color:#5F5F5F;">9</div>
<div class="m" style="left:652px;top:661px;width:517px;overflow:hidden">    <span class="k">WHERE</span> <span class="r">'$(EnvironmentName)'</span> <span class="g">=</span> <span class="r">'testing'</span></div>
<div class="m" style="left:600px;top:679px;width:40px;text-align:right;color:#5F5F5F;">10</div>
<div class="m" style="left:600px;top:696px;width:40px;text-align:right;color:#5F5F5F;">11</div>
<div class="m" style="left:652px;top:695px;width:517px;overflow:hidden">    <span class="k">GROUP</span> <span class="k">BY</span> Cat<span class="g">.</span>CategorySlug<span class="g">,</span> Cat<span class="g">.</span>CategoryName<span class="g">;</span></div>
<div class="m" style="left:600px;top:713px;width:40px;text-align:right;color:#5F5F5F;">12</div>
<div class="m" style="left:652px;top:712px;width:517px;overflow:hidden"><span class="k">GO</span></div>
<div class="m" style="left:600px;top:730px;width:40px;text-align:right;color:#5F5F5F;">13</div>
<div class="m" style="left:600px;top:747px;width:40px;text-align:right;color:#5F5F5F;">14</div>
<div class="a" style="left:577px;top:525px;width:19px;height:396px;background:#E6E6EC;"></div>
<svg style="left:582px;top:532px" width="9" height="5" viewBox="0 0 9 5"><path d="M0 5L4.5 0L9 5Z" fill="#7E8196"/></svg>
<div class="a" style="left:581px;top:542px;width:11px;height:226px;background:#BBBCC3;"></div>
<svg style="left:582px;top:909px" width="9" height="5" viewBox="0 0 9 5"><path d="M0 0L4.5 5L9 0Z" fill="#7E8196"/></svg>
<div class="a" style="left:577px;top:600px;width:19px;height:2px;background:#0000B8;"></div>
<div class="a" style="left:1169px;top:525px;width:19px;height:396px;background:#E6E6EC;"></div>
<svg style="left:1174px;top:532px" width="9" height="5" viewBox="0 0 9 5"><path d="M0 5L4.5 0L9 5Z" fill="#7E8196"/></svg>
<div class="a" style="left:1173px;top:542px;width:11px;height:230px;background:#BBBCC3;"></div>
<svg style="left:1174px;top:909px" width="9" height="5" viewBox="0 0 9 5"><path d="M0 0L4.5 5L9 0Z" fill="#7E8196"/></svg>
<div class="a" style="left:1169px;top:600px;width:19px;height:2px;background:#0000B8;"></div>
<div class="a" style="left:597px;top:524px;width:3px;height:413px;background:#4F5B8C;"></div>
<svg style="left:9px;top:524px" width="60" height="400" viewBox="0 0 60 400">
<path d="M4 17.5Q4 16.5 5 16.5H18L37 4H53Q55 4 55 6V391Q55 393 53 394L39 394L37 394L18 381H5Q4 381 4 380Z" fill="#E8F5E4" stroke="#2F7A1E" stroke-width="2"/>
<rect x="6.5" y="20.5" width="12" height="358" rx="3" fill="#E8F5E4" stroke="#3A3A3A" stroke-width="1"/>
<rect x="39.5" y="6.5" width="12" height="385" rx="3" fill="#E8F5E4" stroke="#3A3A3A" stroke-width="1"/>
<defs>
<linearGradient id="gy" x1="0" x2="1"><stop offset="0" stop-color="#E8F27A"/><stop offset="1" stop-color="#D9A38C"/></linearGradient>
<linearGradient id="gs" x1="0" x2="1"><stop offset="0" stop-color="#E8F5E4"/><stop offset="1" stop-color="#D9A38C"/></linearGradient>
</defs>
<path d="M19 186L39 172V200L19 213Z" fill="url(#gy)"/>
<path d="M20 227H39V254Z" fill="url(#gs)"/>
<path d="M19 268L39 282V309L19 296Z" fill="url(#gy)"/>
<rect x="6.5" y="186" width="12" height="27" fill="#E8F27A" stroke="#555" stroke-width="1"/>
<rect x="6.5" y="268" width="12" height="28" fill="#E8F27A" stroke="#555" stroke-width="1"/>
<rect x="39.5" y="172" width="12" height="28" fill="#D9A38C" stroke="#555" stroke-width="1"/>
<rect x="39.5" y="227" width="12" height="27" fill="#D9A38C" stroke="#555" stroke-width="1"/>
<rect x="39.5" y="282" width="12" height="27" fill="#D9A38C" stroke="#555" stroke-width="1"/>
</svg>
<div class="a" style="left:9px;top:921px;width:588px;height:17px;background:#E6E6EC;"></div>
<div class="a" style="left:9px;top:921px;width:60px;height:17px;background:#F0F2FA;border:1px solid #8D90AA"></div>
<div class="t" style="left:12px;top:924px;font-size:10.8px;line-height:13px;color:#1E1E1E">100 %</div>
<svg style="left:59px;top:928px" width="6" height="3" viewBox="0 0 6 3"><path d="M0 0H6L3 3Z" fill="#1E1E1E"/></svg>
<svg style="left:93px;top:924px" width="11" height="11" viewBox="0 0 11 11"><circle cx="5.5" cy="5.5" r="5.5" fill="#2E7A33"/><path d="M2.8 5.7L4.7 7.5L8.2 3.8" fill="none" stroke="#fff" stroke-width="1.3"/></svg>
<div class="t" style="left:109px;top:924px;font-size:10.8px;line-height:13px;color:#1E1E1E">No issues found</div>
<svg style="left:269px;top:925px" width="5" height="9" viewBox="0 0 5 9"><path d="M5 0V9L0 4.5Z" fill="#8A8A9A"/></svg>
<div class="a" style="left:280px;top:925px;width:66px;height:9px;background:#BBBCC3;"></div>
<svg style="left:392px;top:925px" width="5" height="9" viewBox="0 0 5 9"><path d="M0 0V9L5 4.5Z" fill="#8A8A9A"/></svg>
<div class="t" style="left:425px;top:924px;font-size:10.5px;line-height:13px;color:#1E1E1E">Ln: 7</div>
<div class="t" style="left:466px;top:924px;font-size:10.5px;line-height:13px;color:#1E1E1E">Ch: 1</div>
<div class="t" style="left:509px;top:924px;font-size:10.5px;line-height:13px;color:#1E1E1E">TABS</div>
<div class="t" style="left:553px;top:924px;font-size:10.5px;line-height:13px;color:#1E1E1E">MIXED</div>
<div class="a" style="left:600px;top:921px;width:588px;height:17px;background:#E6E6EC;"></div>
<div class="a" style="left:601px;top:921px;width:60px;height:17px;background:#F0F2FA;border:1px solid #8D90AA"></div>
<div class="t" style="left:604px;top:924px;font-size:10.8px;line-height:13px;color:#1E1E1E">100 %</div>
<svg style="left:651px;top:928px" width="6" height="3" viewBox="0 0 6 3"><path d="M0 0H6L3 3Z" fill="#1E1E1E"/></svg>
<svg style="left:685px;top:924px" width="11" height="11" viewBox="0 0 11 11"><circle cx="5.5" cy="5.5" r="5.5" fill="#2E7A33"/><path d="M2.8 5.7L4.7 7.5L8.2 3.8" fill="none" stroke="#fff" stroke-width="1.3"/></svg>
<div class="t" style="left:701px;top:924px;font-size:10.8px;line-height:13px;color:#1E1E1E">No issues found</div>
<svg style="left:861px;top:925px" width="5" height="9" viewBox="0 0 5 9"><path d="M5 0V9L0 4.5Z" fill="#8A8A9A"/></svg>
<div class="a" style="left:872px;top:925px;width:73px;height:9px;background:#BBBCC3;"></div>
<svg style="left:984px;top:925px" width="5" height="9" viewBox="0 0 5 9"><path d="M0 0V9L5 4.5Z" fill="#8A8A9A"/></svg>
<div class="t" style="left:1016px;top:924px;font-size:10.5px;line-height:13px;color:#1E1E1E">Ln: 7</div>
<div class="t" style="left:1057px;top:924px;font-size:10.5px;line-height:13px;color:#1E1E1E">Ch: 1</div>
<div class="t" style="left:1100px;top:924px;font-size:10.5px;line-height:13px;color:#1E1E1E">TABS</div>
<div class="t" style="left:1144px;top:924px;font-size:10.5px;line-height:13px;color:#1E1E1E">MIXED</div>
<div class="a" style="left:9px;top:941px;width:1179px;height:24px;background:#FFFFFF;border:1px solid #9A9A9A"></div>
<div class="t" style="left:15px;top:947px;">Comparison complete.  Differences detected.</div>
<div class="a" style="left:1199px;top:4px;width:389px;height:21px;background:#3D4B7D;"></div>
<div class="a" style="left:1538px;top:4px;width:50px;height:21px;background:#3C4D7B;"></div>
<div class="t" style="left:1203px;top:8px;color:#FFFFFF;">Solution Explorer</div>
<svg style="left:1540px;top:12px" width="8" height="4" viewBox="0 0 8 4"><path d="M0 0H8L4 4Z" fill="#B5B8E0"/></svg>
<svg style="left:1557px;top:9px" width="8" height="11" viewBox="0 0 8 11"><path d="M2 0.6H6V6.5H2Z M0 6.5H8 M4 6.5V11" fill="none" stroke="#C0C3E8" stroke-width="1.2"/></svg>
<svg style="left:1572px;top:10px" width="10" height="9" viewBox="0 0 10 9"><path d="M0.5 0.5L9.5 8.5M9.5 0.5L0.5 8.5" stroke="#C0C3E8" stroke-width="1.2"/></svg>
<div class="a" style="left:1199px;top:25px;width:389px;height:51px;background:#C8CFEA;"></div>
<svg style="left:1205px;top:32px" width="17" height="15" viewBox="0 0 17 15"><path d="M7.5 0.6H15.5V11.4H9.5" fill="none" stroke="#1E1E1E" stroke-width="1.2"/><path d="M7 1.5H16" stroke="#1E1E1E" stroke-width="2"/>
<path d="M9 4.5H10M11 4.5H14M9 6.5H10M11 6.5H14M11 8.5H14" stroke="#1E1E1E" stroke-width="1"/>
<path d="M1.5 8.2V12.8L9.3 6.3V14.3Z" fill="none" stroke="#7B5BC9" stroke-width="1.6" stroke-linejoin="round"/></svg>
<div class="a" style="left:1228px;top:29px;width:1px;height:20px;background:#8B9DCB;"></div>
<svg style="left:1237px;top:31px" width="15" height="16" viewBox="0 0 15 16"><path d="M0 0H5.5L3.5 2V4.6H2V2Z" fill="#2A62C0"/><circle cx="8.3" cy="9.1" r="5.2" fill="#C9D0E6" stroke="#1E1E1E" stroke-width="1.2"/><path d="M8 6V9.5H10.5" fill="none" stroke="#1E1E1E" stroke-width="1.1"/></svg>
<svg style="left:1259px;top:38px" width="6" height="3" viewBox="0 0 6 3"><path d="M0 0H6L3 3Z" fill="#1E1E1E"/></svg>
<svg style="left:1272px;top:34px" width="14" height="10" viewBox="0 0 14 10"><path d="M13 3H1.5M4 0.5L1.5 3M0.8 7.5H12.5M10 10L12.5 7.5" fill="none" stroke="#1E1E1E" stroke-width="1.2"/></svg>
<svg style="left:1293px;top:32px" width="15" height="15" viewBox="0 0 15 15"><path d="M5 1.5A6.3 6.3 0 1 0 10 1.5" fill="none" stroke="#2E6FD0" stroke-width="1.2"/><path d="M4.6 0.5V4.5M1.5 1.6H5.2" fill="none" stroke="#2E6FD0" stroke-width="1.2"/></svg>
<svg style="left:1316px;top:31px" width="15" height="15" viewBox="0 0 15 15"><rect x="0.6" y="3.6" width="10.8" height="10.8" fill="#B5BCD7" stroke="#1E1E1E" stroke-width="1.2"/><path d="M3 0.6H14.4V12H12M2.5 9H9.5" fill="none" stroke="#1E1E1E" stroke-width="1.2"/><path d="M3 9H9" stroke="#1E1E1E" stroke-width="1.2"/></svg>
<svg style="left:1337px;top:32px" width="16" height="16" viewBox="0 0 16 16"><path d="M0.5 0H1.5M2.5 0H3.5M4.5 0H5.5M0.5 0V1M0.5 2V3M0.5 4V5M0.5 6V7M0.5 8V9" stroke="#1E1E1E" stroke-width="1"/><path d="M6.5 2.5H11.5L14.5 5.5V12.5H12" fill="none" stroke="#1E1E1E" stroke-width="1.1"/><path d="M4.5 5.5H9.5L11.5 7.5V14.5H4.5Z" fill="#C8CFEA" stroke="#1E1E1E" stroke-width="1.1"/><path d="M6 9.5H9.5M6 11.5H10M6 13.2H9" stroke="#1E1E1E" stroke-width="1"/></svg>
<div class="a" style="left:1359px;top:29px;width:1px;height:20px;background:#8B9DCB;"></div>
<svg style="left:1368px;top:32px" width="15" height="15" viewBox="0 0 15 15"><path d="M1.5 13.5L7 8" stroke="#1E1E1E" stroke-width="3.2" stroke-linecap="round"/><path d="M1.5 13.5L7 8" stroke="#D0D4E8" stroke-width="1"/><path d="M6.5 6.2A4.5 4.5 0 0 1 11 0.7L9.4 3.2L11.5 5.2L14 3.8A4.5 4.5 0 0 1 8.3 8.5Z" fill="#1E1E1E"/></svg>
<div class="a" style="left:1386px;top:27px;width:22px;height:24px;background:#FCE9C6;border:1px solid #8C6A30"></div>
<svg style="left:1390px;top:32px" width="15" height="12" viewBox="0 0 15 12"><path d="M0.5 9.3H2.5M2.5 9.5V6.8Q2.5 6.3 3 6.3H10Q10.5 6.3 10.5 6.8V9.5H2.5" fill="none" stroke="#1E1E1E" stroke-width="1.1"/><path d="M10.5 0V2M12.5 2.7L14 1.2M13 5.5H15" stroke="#A07A30" stroke-width="1"/></svg>
<div class="a" style="left:1201px;top:53px;width:385px;height:21px;background:#FFFFFF;border:1px solid #8C8C96"></div>
<div class="t" style="left:1206px;top:56px;color:#6D6D6D;">Search Solution Explorer (Ctrl+;)</div>
<div class="a" style="left:1573px;top:54px;width:1px;height:19px;background:#C8C8D0;"></div>
<div class="a" style="left:1574px;top:54px;width:11px;height:19px;background:#F2F4FB;"></div>
<svg style="left:1576px;top:61px" width="6" height="3" viewBox="0 0 6 3"><path d="M0 0H6L3 3Z" fill="#1E1E1E"/></svg>
<svg style="left:1558px;top:56px" width="13" height="14" viewBox="0 0 13 14"><circle cx="8.3" cy="5" r="3.9" fill="none" stroke="#555" stroke-width="1.5"/><path d="M5.5 7.8L1.5 11.8" stroke="#555" stroke-width="2" stroke-linecap="round"/></svg>
<div class="a" style="left:1199px;top:74px;width:389px;height:2px;background:#D5DBF1;"></div>
<div class="a" style="left:1199px;top:76px;width:389px;height:642px;background:#F5F6FC;"></div>
<div class="a" style="left:1199px;top:285px;width:389px;height:19px;background:#E0E2EC;"></div>
<svg style="left:1214px;top:79px" width="14" height="14" viewBox="0 0 14 14"><rect x="0.6" y="0.6" width="12.8" height="3" fill="#F8F8F8" stroke="#1E1E1E" stroke-width="1.2"/><path d="M0.6 4V13.3H3.5" fill="none" stroke="#333" stroke-width="1.2"/><rect x="1.2" y="4.2" width="6" height="8.5" fill="#E4E4EA"/><path d="M5.8 6.8V11.8L13 5.3V13.7Z" fill="none" stroke="#6C5CC8" stroke-width="1.6" stroke-linejoin="round"/></svg>
<div class="t" style="left:1233px;top:79px;">Solution 'ContosoOld' (3 of 3 projects)</div>
<svg style="left:1210px;top:101px" width="6" height="7" viewBox="0 0 6 7"><path d="M6 0V6.5H0Z" fill="#1E1E1E"/></svg>
<svg style="left:1232px;top:98px" width="14" height="14" viewBox="0 0 14 14"><rect x="1.2" y="2.5" width="11.5" height="10" fill="#E8E8F2"/><path d="M0.8 0H13.2M0.8 6V1.5M13.2 1V12.5H7" fill="none" stroke="#333" stroke-width="1.6"/><rect x="0" y="0" width="14" height="3" fill="#333"/><circle cx="3.3" cy="10.4" r="3.3" fill="#333"/><path d="M1.8 9.2H4.8" stroke="#fff" stroke-width="1"/></svg>
<div class="t" style="left:1252px;top:98px;color:#1E1E1E;font-weight:bold">ContosoOld</div>
<svg style="left:1251px;top:117px" width="12" height="12" viewBox="0 0 12 12"><path d="M1 11L5.5 6.5" stroke="#333" stroke-width="2.6" stroke-linecap="round"/><path d="M4.8 5.5A3.7 3.7 0 0 1 8.5 0.6L7.2 2.6L9 4.3L11 3A3.7 3.7 0 0 1 6.3 7Z" fill="#333"/></svg>
<div class="t" style="left:1270px;top:117px;">Properties</div>
<svg style="left:1250px;top:139px" width="14" height="7" viewBox="0 0 14 7"><rect x="0" y="1" width="3" height="4" fill="#333"/><rect x="4.5" y="2.6" width="1.6" height="1" fill="#333"/><rect x="7" y="0" width="7" height="6.5" fill="#333"/></svg>
<div class="t" style="left:1270px;top:136px;">References</div>
<svg style="left:1250px;top:155px" width="14" height="14" viewBox="0 0 14 14"><rect x="0" y="0" width="14" height="3" fill="#333"/><path d="M0.8 2V5M13.2 2V12.2H9.5" fill="none" stroke="#333" stroke-width="1.5"/><rect x="2" y="5.5" width="6.5" height="6" fill="#E8E8F2"/><path d="M2 11.5V6H9.2V8.5M0.8 12.5Q0.8 13.3 2 13.3H6.5Q7.3 13.3 7.3 12V6" fill="none" stroke="#333" stroke-width="1.5"/></svg>
<div class="t" style="left:1270px;top:155px;">Categories.sql</div>
<svg style="left:1250px;top:174px" width="14" height="14" viewBox="0 0 14 14"><rect x="0" y="0" width="14" height="3" fill="#333"/><path d="M0.8 2V5M13.2 2V12.2H9.5" fill="none" stroke="#333" stroke-width="1.5"/><rect x="2" y="5.5" width="6.5" height="6" fill="#E8E8F2"/><path d="M2 11.5V6H9.2V8.5M0.8 12.5Q0.8 13.3 2 13.3H6.5Q7.3 13.3 7.3 12V6" fill="none" stroke="#333" stroke-width="1.5"/></svg>
<div class="t" style="left:1270px;top:174px;">CategoriesProductCount.sql</div>
<svg style="left:1250px;top:193px" width="14" height="14" viewBox="0 0 14 14"><rect x="0" y="0" width="14" height="3" fill="#333"/><path d="M0.8 2V5M13.2 2V12.2H9.5" fill="none" stroke="#333" stroke-width="1.5"/><rect x="2" y="5.5" width="6.5" height="6" fill="#E8E8F2"/><path d="M2 11.5V6H9.2V8.5M0.8 12.5Q0.8 13.3 2 13.3H6.5Q7.3 13.3 7.3 12V6" fill="none" stroke="#333" stroke-width="1.5"/></svg>
<div class="t" style="left:1270px;top:193px;">CO.sql</div>
<svg style="left:1251px;top:212px" width="13" height="14" viewBox="0 0 13 14"><rect x="2.2" y="0.8" width="10" height="12" fill="#E8E8F2" stroke="#333" stroke-width="1.6"/><path d="M0 1.5L1.5 2.5L0 3.5L1.5 4.5L0 5.5L1.5 6.5L0 7.5L1.5 8.5L0 9.5L1.5 10.5L0 11.5L1.5 12.5" fill="none" stroke="#333" stroke-width="0.9"/><path d="M4.5 3.8H9.5" stroke="#333" stroke-width="1.5"/><rect x="3.3" y="5" width="8" height="7" fill="#E8E8F2"/></svg>
<div class="t" style="left:1270px;top:212px;">ContosoOld.refactorlog</div>
<svg style="left:1250px;top:231px" width="14" height="14" viewBox="0 0 14 14"><rect x="0" y="0" width="14" height="3" fill="#333"/><path d="M0.8 2V5M13.2 2V12.2H9.5" fill="none" stroke="#333" stroke-width="1.5"/><rect x="2" y="5.5" width="6.5" height="6" fill="#E8E8F2"/><path d="M2 11.5V6H9.2V8.5M0.8 12.5Q0.8 13.3 2 13.3H6.5Q7.3 13.3 7.3 12V6" fill="none" stroke="#333" stroke-width="1.5"/></svg>
<div class="t" style="left:1270px;top:231px;">Products.sql</div>
<svg style="left:1250px;top:250px" width="14" height="14" viewBox="0 0 14 14"><rect x="0" y="0" width="14" height="3" fill="#333"/><path d="M0.8 2V5M13.2 2V12.2H9.5" fill="none" stroke="#333" stroke-width="1.5"/><rect x="2" y="5.5" width="6.5" height="6" fill="#E8E8F2"/><path d="M2 11.5V6H9.2V8.5M0.8 12.5Q0.8 13.3 2 13.3H6.5Q7.3 13.3 7.3 12V6" fill="none" stroke="#333" stroke-width="1.5"/></svg>
<div class="t" style="left:1270px;top:250px;">Script.PreDeployment1.sql</div>
<svg style="left:1250px;top:269px" width="14" height="14" viewBox="0 0 14 14"><rect x="0" y="0" width="14" height="3" fill="#333"/><path d="M0.8 2V5M13.2 2V12.2H9.5" fill="none" stroke="#333" stroke-width="1.5"/><rect x="2" y="5.5" width="6.5" height="6" fill="#E8E8F2"/><path d="M2 11.5V6H9.2V8.5M0.8 12.5Q0.8 13.3 2 13.3H6.5Q7.3 13.3 7.3 12V6" fill="none" stroke="#333" stroke-width="1.5"/></svg>
<div class="t" style="left:1270px;top:269px;">SelectStarView.sql</div>
<svg style="left:1250px;top:288px" width="14" height="14" viewBox="0 0 14 14"><rect x="0" y="0" width="14" height="3" fill="#333"/><path d="M0.8 2V5M13.2 2V12.2H9.5" fill="none" stroke="#333" stroke-width="1.5"/><rect x="2" y="5.5" width="6.5" height="6" fill="#E8E8F2"/><path d="M2 11.5V6H9.2V8.5M0.8 12.5Q0.8 13.3 2 13.3H6.5Q7.3 13.3 7.3 12V6" fill="none" stroke="#333" stroke-width="1.5"/></svg>
<div class="t" style="left:1270px;top:288px;">Table1.sql</div>
<svg style="left:1209px;top:309px" width="6" height="10" viewBox="0 0 6 10"><path d="M0.6 0.8V9.2L5 5Z" fill="none" stroke="#1E1E1E" stroke-width="1.1"/></svg>
<svg style="left:1232px;top:307px" width="14" height="14" viewBox="0 0 14 14"><rect x="1.2" y="2.5" width="11.5" height="10" fill="#E8E8F2"/><path d="M0.8 0H13.2M0.8 6V1.5M13.2 1V12.5H7" fill="none" stroke="#333" stroke-width="1.6"/><rect x="0" y="0" width="14" height="3" fill="#333"/><circle cx="3.3" cy="10.4" r="3.3" fill="#333"/><path d="M1.8 9.2H4.8" stroke="#fff" stroke-width="1"/></svg>
<div class="t" style="left:1252px;top:307px;">Database1</div>
<svg style="left:1209px;top:328px" width="6" height="10" viewBox="0 0 6 10"><path d="M0.6 0.8V9.2L5 5Z" fill="none" stroke="#1E1E1E" stroke-width="1.1"/></svg>
<svg style="left:1232px;top:326px" width="14" height="14" viewBox="0 0 14 14"><rect x="1.2" y="2.5" width="11.5" height="10" fill="#E8E8F2"/><path d="M0.8 0H13.2M0.8 6V1.5M13.2 1V12.5H7" fill="none" stroke="#333" stroke-width="1.6"/><rect x="0" y="0" width="14" height="3" fill="#333"/><circle cx="3.3" cy="10.4" r="3.3" fill="#333"/><path d="M1.8 9.2H4.8" stroke="#fff" stroke-width="1"/></svg>
<div class="t" style="left:1252px;top:326px;">Database3</div>
<div class="a" style="left:1199px;top:697px;width:389px;height:21px;background:#525D8C;"></div>
<div class="a" style="left:1199px;top:697px;width:100px;height:21px;background:#F5F6FC;"></div>
<div class="t" style="left:1204px;top:701px;color:#1E1E1E;">Solution Explorer</div>
<div class="a" style="left:1300px;top:698px;width:75px;height:19px;background:#3D4B7D;"></div>
<div class="t" style="left:1306px;top:701px;color:#FFFFFF;">Git Changes</div>
<div class="a" style="left:1199px;top:718px;width:389px;height:8px;background:#525D8C;"></div>
<div class="a" style="left:1199px;top:726px;width:389px;height:21px;background:#3D4B7D;"></div>
<div class="t" style="left:1203px;top:730px;color:#FFFFFF;">Properties</div>
<svg style="left:1540px;top:734px" width="8" height="4" viewBox="0 0 8 4"><path d="M0 0H8L4 4Z" fill="#B5B8E0"/></svg>
<svg style="left:1557px;top:731px" width="8" height="11" viewBox="0 0 8 11"><path d="M2 0.6H6V6.5H2Z M0 6.5H8 M4 6.5V11" fill="none" stroke="#C0C3E8" stroke-width="1.2"/></svg>
<svg style="left:1572px;top:732px" width="10" height="9" viewBox="0 0 10 9"><path d="M0.5 0.5L9.5 8.5M9.5 0.5L0.5 8.5" stroke="#C0C3E8" stroke-width="1.2"/></svg>
<div class="a" style="left:1199px;top:747px;width:389px;height:221px;background:#F5F6FC;"></div>
<svg style="left:1577px;top:757px" width="7" height="4" viewBox="0 0 7 4"><path d="M0 0H7L3.5 4Z" fill="#1E1E1E"/></svg>
<div class="a" style="left:1199px;top:772px;width:389px;height:25px;background:#C8CFEA;"></div>
<div class="a" style="left:1202px;top:773px;width:23px;height:23px;background:#FCE9C6;border:1px solid #8C6A30"></div>
<svg style="left:1206px;top:777px" width="15" height="15" viewBox="0 0 15 15"><rect x="0" y="0" width="5" height="5" fill="#1E1E1E"/><path d="M2.5 1V4M1 2.5H4" stroke="#FCE9C6" stroke-width="1"/><rect x="0" y="8" width="5" height="5" fill="#1E1E1E"/><path d="M2.5 9V12M1 10.5H4" stroke="#FCE9C6" stroke-width="1"/><path d="M6 0.5H12M6 2.5H12M6 4.5H12M13 0.5H14M13 2.5H14M13 4.5H14M6 8.5H12M6 10.5H12M6 12.5H11M13 12.5H14" stroke="#1E1E1E" stroke-width="1"/></svg>
<svg style="left:1229px;top:777px" width="16" height="16" viewBox="0 0 16 16"><text x="0" y="7" font-family="Liberation Sans" font-weight="bold" font-size="8" fill="#1E1E1E">A</text><text x="0" y="14.5" font-family="Liberation Sans" font-weight="bold" font-size="8" fill="#1E1E1E">Z</text><path d="M11 3V12M8 9L11 12L14 9" fill="none" stroke="#2A62C0" stroke-width="1.6"/></svg>
<div class="a" style="left:1251px;top:775px;width:1px;height:20px;background:#A0A8C8;"></div>
<svg style="left:1257px;top:777px" width="15" height="15" viewBox="0 0 15 15"><path d="M1.5 13L6.5 8" stroke="#8A8A8A" stroke-width="3" stroke-linecap="round"/><path d="M6 6.5A4.3 4.3 0 0 1 10.5 1L9 3.2L11 5L13.3 3.6A4.3 4.3 0 0 1 8 8.5Z" fill="#8A8A8A"/></svg>
</body></html>
